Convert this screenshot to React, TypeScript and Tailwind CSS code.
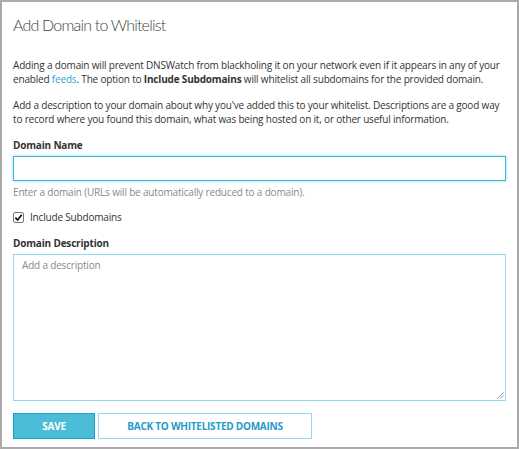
import React from "react";

export default function App() {
  const body = "text-[10px] leading-[14px] tracking-[-0.18px] whitespace-nowrap";
  return (
    <div
      className="w-[519px] h-[449px] border-2 border-[#ababab] bg-white pl-[11px] pr-[12px] pt-[11px] text-[#333]"
      style={{ fontFamily: '"Open Sans", "Liberation Sans", sans-serif' }}
    >
      <h1
        className="text-[16px] leading-[24px] font-light tracking-[-0.8px] text-[#444]"
        style={{ fontFamily: 'Lato, "Open Sans", sans-serif' }}
      >
        Add Domain to Whitelist
      </h1>
      <p className={`mt-[21px] ${body}`}>
        Adding a domain will prevent DNSWatch from blackholing it on your network even if it appears in any of your
        <br />
        enabled <a className="text-[#2ea7d3]">feeds</a>. The option to <b className="font-bold">Include Subdomains</b> will
        whitelist all subdomains for the provided domain.
      </p>
      <p className={`mt-[12px] ${body}`}>
        Add a description to your domain about why you've added this to your whitelist. Descriptions are a good way
        <br />
        to record where you found this domain, what was being hosted on it, or other useful information.
      </p>
      <div className={`mt-[12px] ${body} font-bold`}>Domain Name</div>
      <div className="mt-[4px] h-[25px] w-[493px] border border-[#3ab3d6] shadow-[0_0_3px_#8fd8ec]"></div>
      <div className={`mt-[4px] ${body} text-[#8a8a8a]`}>
        Enter a domain (URLs will be automatically reduced to a domain).
      </div>
      <div className="mt-[11px] flex items-center gap-[6px]">
        <span className="w-[11px] h-[11px] border border-[#777] rounded-[2px] bg-white flex items-center justify-center">
          <svg width="9" height="9" viewBox="0 0 10 10">
            <path d="M1.5 5.2 L4 7.8 L8.6 2" fill="none" stroke="#111" strokeWidth="1.9" />
          </svg>
        </span>
        <span className={body}>Include Subdomains</span>
      </div>
      <div className={`mt-[12px] ${body} font-bold`}>Domain Description</div>
      <div className={`relative mt-[4px] h-[147px] w-[493px] border border-[#8cdbeb] pl-[8px] pt-[3px] ${body}`}>
        <span className="text-[#8a8a8a]">Add a description</span>
        <svg className="absolute right-[1px] bottom-[1px]" width="7" height="7" viewBox="0 0 7 7">
          <path d="M6.5 0.5 L0.5 6.5 M6.5 3.5 L3.5 6.5" stroke="#999" strokeWidth="1" />
        </svg>
      </div>
      <div className="mt-[12px] flex gap-[3px]">
        <button className="w-[82px] h-[26px] bg-[#4bbdd7] border border-[#1ba4c8] text-white text-[10px] font-bold tracking-tight">
          SAVE
        </button>
        <button className="w-[214px] h-[26px] bg-white border border-[#8cdbeb] text-[#1f9bc8] text-[10px] font-bold tracking-tight">
          BACK TO WHITELISTED DOMAINS
        </button>
      </div>
    </div>
  );
}
